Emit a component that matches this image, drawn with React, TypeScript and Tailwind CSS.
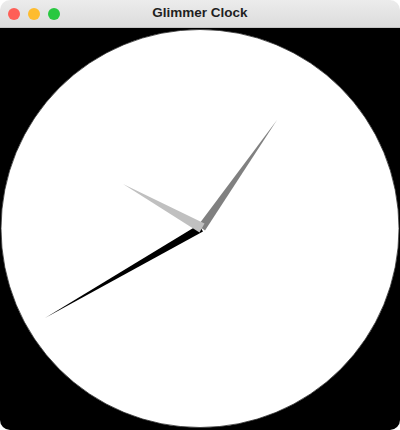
export default function App() {
  return (
    <div className="w-[400px] h-[430px] bg-white">
      <div className="w-full h-full flex flex-col rounded-[10px] overflow-hidden">
        {/* Title bar */}
        <div className="relative h-[28px] shrink-0 flex items-center bg-gradient-to-b from-[#ececec] to-[#dcdcdc] border-b border-[#c4c4c4]">
          <div className="flex items-center gap-[8px] pl-[8px]">
            <span className="w-[12px] h-[12px] rounded-full bg-[#fe5f57]" />
            <span className="w-[12px] h-[12px] rounded-full bg-[#febc2e]" />
            <span className="w-[12px] h-[12px] rounded-full bg-[#28c840]" />
          </div>
          <div className="absolute inset-0 flex items-center justify-center text-[13.5px] font-bold text-[#1f1f1f] font-['Liberation_Sans',Arial,sans-serif]">
            Glimmer Clock
          </div>
        </div>

        {/* Clock face */}
        <div className="flex-1 bg-black">
          <svg width="400" height="402" viewBox="0 0 400 402">
            <circle cx="200" cy="200.5" r="199" fill="#ffffff" stroke="#333" strokeWidth="0.8" />
            {/* second hand */}
            <polygon points="45,290 203,203.5 199,196.5" fill="#000000" />
            {/* minute hand */}
            <polygon points="277,92 205,202.5 198,197.5" fill="#808080" />
            {/* hour hand */}
            <polygon points="123,156 204.5,195.5 199.5,204.5" fill="#c0c0c0" />
          </svg>
        </div>
      </div>
    </div>
  );
}
